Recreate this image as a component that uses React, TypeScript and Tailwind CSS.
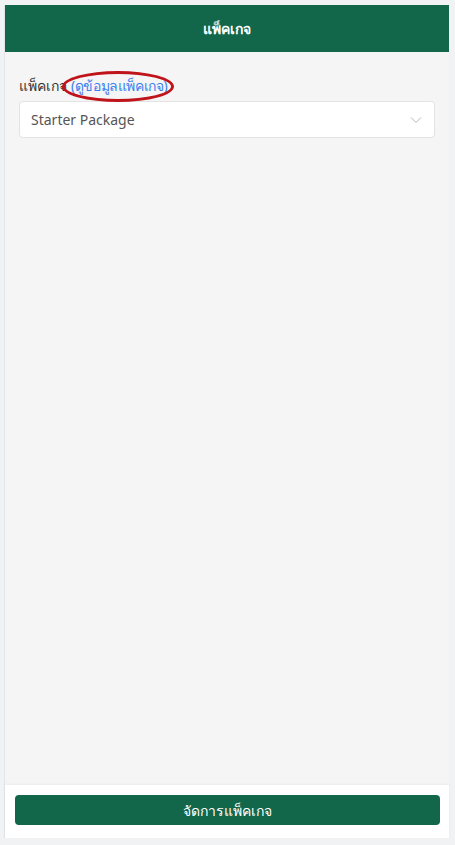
import React from "react";

export default function App() {
  return (
    <div
      className="h-[845px] w-[455px] bg-[#f1f2f3] pt-[5px] pl-[4px] pr-[6px] pb-[7px]"
      style={{ fontFamily: '"Noto Sans", "Open Sans", sans-serif' }}
    >
      <div className="flex h-full flex-col border-l border-[#e2e4e6] bg-[#f5f5f5]">
        <div className="flex h-[47px] items-center justify-center bg-[#12664a] text-[14px] font-semibold text-white">
          แพ็คเกจ
        </div>
        <div className="flex-1 px-[14px] pt-[24px]">
          <div className="relative flex items-center text-[14px] leading-[20px] text-[#333]">
            <span>แพ็คเกจ</span>
            <span className="ml-[4px] tracking-[-0.4px] text-[#3b7ff0]">(ดูข้อมูลแพ็คเกจ)</span>
            <div className="absolute left-[43px] top-[-5px] h-[31px] w-[112px] rounded-[50%] border-[3px] border-[#c0141b]" />
          </div>
          <div className="mt-[5px] flex h-[37px] items-center justify-between rounded-[4px] border border-[#e3e3e3] bg-white pl-[11px] pr-[12px] text-[14px] text-[#555]">
            <span>Starter Package</span>
            <svg width="12" height="8" viewBox="0 0 12 8" fill="none">
              <path d="M1 1.5L6 6.5L11 1.5" stroke="#b8b8b8" strokeWidth="1" />
            </svg>
          </div>
        </div>
        <div className="flex h-[53px] items-start bg-white pl-[10px] pr-[9px] pt-[10px] shadow-[0_-1px_3px_rgba(0,0,0,0.04)]">
          <button className="flex h-[30px] w-full items-center justify-center rounded-[4px] bg-[#12664a] text-[14px] text-white">
            จัดการแพ็คเกจ
          </button>
        </div>
      </div>
    </div>
  );
}
